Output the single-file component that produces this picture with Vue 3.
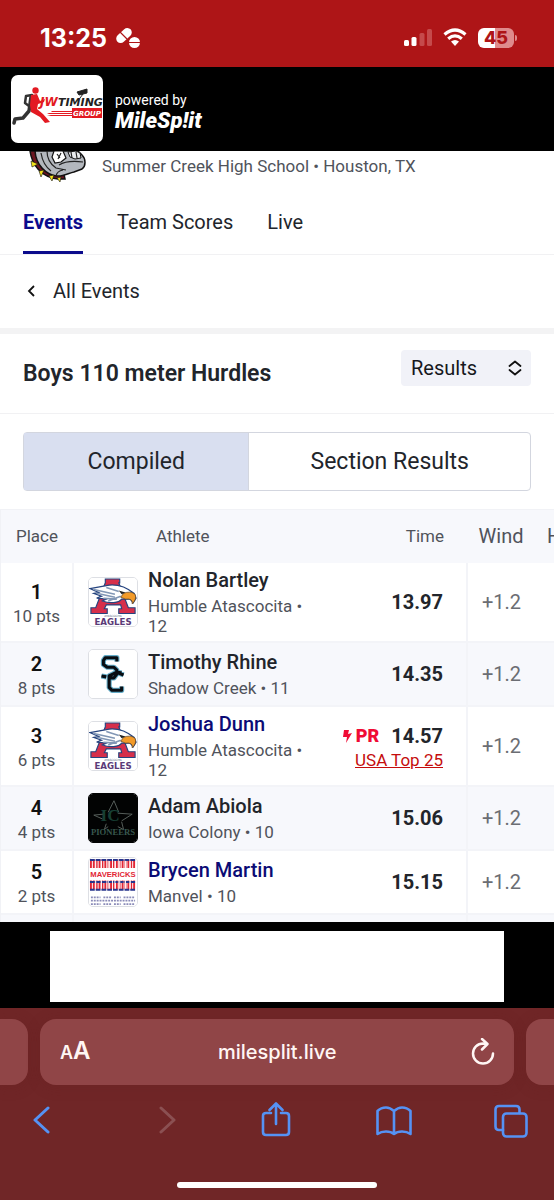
<script setup>
import { ref } from 'vue'

const tabs = ['Events', 'Team Scores', 'Live']
const activeTab = ref('Events')
const mode = ref('Compiled')
const view = ref('Results')
const address = ref('milesplit.live')

const rows = [
  { place: 1, pts: '10 pts', name: 'Nolan Bartley', school: 'Humble Atascocita', grade: 12, time: '13.97', wind: '+1.2', logo: 'eagles' },
  { place: 2, pts: '8 pts', name: 'Timothy Rhine', school: 'Shadow Creek', grade: 11, time: '14.35', wind: '+1.2', logo: 'creek' },
  { place: 3, pts: '6 pts', name: 'Joshua Dunn', school: 'Humble Atascocita', grade: 12, time: '14.57', wind: '+1.2', logo: 'eagles', link: true, pr: true, rank: 'USA Top 25' },
  { place: 4, pts: '4 pts', name: 'Adam Abiola', school: 'Iowa Colony', grade: 10, time: '15.06', wind: '+1.2', logo: 'pioneers' },
  { place: 5, pts: '2 pts', name: 'Brycen Martin', school: 'Manvel', grade: 10, time: '15.15', wind: '+1.2', logo: 'mavericks', link: true }
]
</script>

<template>
  <div class="phone">
    <div class="status">
      <div class="clock">
        <span>13:25</span>
        <svg width="26" height="24" viewBox="0 0 26 24" aria-hidden="true">
          <g fill="#fff">
            <rect x="0" y="5" width="18" height="9" rx="4.500" transform="rotate(-43 9 9.500)" />
            <circle cx="19.500" cy="16.500" r="5.500" />
          </g>
          <path d="M5 6l7 7M13 16.500h13" stroke="#ae1517" stroke-width="1.200" />
        </svg>
      </div>
      <div class="signals">
        <svg width="28" height="20" viewBox="0 0 28 20" aria-hidden="true">
          <rect x="0" y="12" width="5" height="6" rx="1.500" fill="#fff" />
          <rect x="7.500" y="9" width="5" height="9" rx="1.500" fill="#fff" />
          <rect x="15.500" y="5" width="5" height="13" rx="1.500" fill="#c54a4b" />
          <rect x="23" y="1" width="5" height="17" rx="1.500" fill="#c54a4b" />
        </svg>
        <svg width="24" height="20" viewBox="0 0 24 20" aria-hidden="true">
          <path d="M1.500 6.500Q12 -2.500 22.500 6.500M5.200 10.700Q12 5 18.800 10.700" fill="none" stroke="#fff" stroke-width="3.200" />
          <path d="M8 13.600Q12 10.300 16 13.600L12 18Z" fill="#fff" />
        </svg>
        <div class="battery"><span>45</span></div>
      </div>
    </div>

    <header class="brand">
      <a href="#" class="sponsor" aria-label="JW Timing Group">
        <svg width="92" height="68" viewBox="0 0 92 68" aria-hidden="true">
          <g fill="none" stroke="#333" stroke-linecap="round" stroke-linejoin="round">
            <path d="M21 20L15 21L14 28L18 31" stroke-width="2.500" />
            <path d="M20 22L18 36L12 43L4 44L3 48" stroke-width="3.500" />
          </g>
          <g fill="#e31a22">
            <circle cx="24.500" cy="15.500" r="3.200" />
            <path d="M20 20L26 19L29 26L34 24L33 27L27 29L26 34L32 39L39 47L34 48L29 42L20 37L19 30Z" />
            <path d="M40 36h21v1H41zM36 38h25v1H38zM36 40h25v1H40z" />
            <rect x="61" y="33" width="30" height="10" />
          </g>
          <path d="M66 17l10-3v4l-8 2zM72 19l-3 4" fill="#222" stroke="#222" />
          <text x="29" y="31" class="jw" fill="#e31a22">JW</text>
          <text x="47" y="31" class="timing" fill="#222">TIMING</text>
          <text x="62" y="41" class="group" fill="#fff">GROUP</text>
        </svg>
      </a>
      <div class="powered">
        <span>powered by</span>
        <strong>MileSp!it</strong>
      </div>
    </header>

    <main>
      <div class="venue">
        <svg width="58" height="32" viewBox="0 0 58 32" aria-hidden="true">
          <path d="M1 0C3 14 12 26 29 28L36 28L34 19L18 14L8 0Z" fill="#6b1520" stroke="#111" stroke-width="1.500" />
          <path d="M6 0C7 14 17 24 28 25C33 26 40 22 45 21L53 18C57 15 57 8 53 4L49 0Z" fill="#b3b7bd" stroke="#111" stroke-width="1.500" />
          <path d="M25 0L23 6L26 12L32 11L37 7L34 0Z" fill="#fff" stroke="#111" stroke-width="1.200" />
          <path d="M39 1L41 6L46 8L52 7L51 2L47 0Z" fill="#e9ebed" stroke="#111" stroke-width="1" />
          <path d="M12 2Q14 14 22 20M18 0Q18 11 27 17L37 19M30 14Q38 9 54 11M28 3l3 4m1-5l-3 6m13-7l1 6m4-6l1 6M27 25q1-5 7-6" fill="none" stroke="#222" stroke-width="1.200" />
          <path d="M2 10L9 13L3 16ZM10 20L15 19L12 26ZM20 25L25 24L23 30ZM28 27L32 26L31 31Z" fill="#f3e21b" stroke="#111" stroke-width=".6" />
        </svg>
        <span>Summer Creek High School • Houston, TX</span>
      </div>

      <nav class="tabs">
        <a v-for="tab in tabs" :key="tab" href="#" :class="{ active: activeTab === tab }" @click.prevent="activeTab = tab">{{ tab }}</a>
      </nav>

      <div class="back">
        <a href="#">
          <svg width="8" height="14" viewBox="0 0 8 14" aria-hidden="true"><path d="M7 2L2 7L7 12" fill="none" stroke="#111" stroke-width="1.800" /></svg>
          All Events
        </a>
      </div>

      <div class="title">
        <h1>Boys 110 meter Hurdles</h1>
        <div class="picker">
          <select v-model="view" aria-label="View">
            <option>Results</option>
          </select>
          <svg width="14" height="16" viewBox="0 0 14 16" aria-hidden="true"><path d="M1.500 6L7 1.500L12.500 6M1.500 10L7 14.500L12.500 10" fill="none" stroke="#111" stroke-width="1.800" stroke-linecap="round" stroke-linejoin="round" /></svg>
        </div>
      </div>

      <div class="modes">
        <button v-for="m in ['Compiled', 'Section Results']" :key="m" type="button" :class="{ on: mode === m }" @click="mode = m">{{ m }}</button>
      </div>

      <div class="results">
        <table>
          <colgroup>
            <col class="c-place" /><col class="c-athlete" /><col class="c-time" /><col class="c-wind" /><col class="c-heat" />
          </colgroup>
          <thead>
            <tr>
              <th class="place">Place</th>
              <th class="athlete">Athlete</th>
              <th class="time">Time</th>
              <th class="wind">Wind</th>
              <th class="heat">Heat</th>
            </tr>
          </thead>
          <tbody>
            <tr v-for="r in rows" :key="r.place">
              <td class="place"><b>{{ r.place }}</b><span>{{ r.pts }}</span></td>
              <td class="athlete">
                <div class="who">
                  <svg v-if="r.logo === 'eagles'" class="badge" viewBox="0 0 50 50" aria-hidden="true">
                    <rect width="50" height="50" fill="#fff" />
                    <path d="M17 1H32V5H31L41 31H48V37H31V32H34L33 28H18L16 32H19V37H2V31H7L17 5Z" fill="#d62f4b" stroke="#26447f" stroke-width="1.200" />
                    <path d="M1 11L18 8C25 6 35 8 41 12L47 16L49 21L46 26L43 22L34 22C31 26 22 27 14 24L18 22L8 21L13 19L5 16L10 15Z" fill="#fff" stroke="#26447f" stroke-width="1.300" />
                    <path d="M5 12L27 17M8 16L27 20M15 21L29 22M18 10L31 14M20 24L33 19" stroke="#8297b5" stroke-width="1.600" />
                    <path d="M36 16Q43 13 48 17Q50 22 45 27Q46 21 38 22L33 20Z" fill="#f29a29" stroke="#674927" stroke-width=".8" />
                    <path d="M31 13L38 15L34 17Z" fill="#222" />
                    <text x="25" y="41" class="tiny" text-anchor="middle" fill="#536382">ATASCOCITA</text>
                    <text x="25" y="49" class="eagles" text-anchor="middle" fill="#5b3b78">EAGLES</text>
                  </svg>
                  <svg v-else-if="r.logo === 'creek'" class="badge" viewBox="0 0 50 50" aria-hidden="true">
                    <rect width="50" height="50" fill="#fff" />
                    <g fill="none" stroke-linejoin="round">
                      <path d="M29 12V8H17L15 11V15L19 18H26L29 21V25L26 29H22M13 27L18 28M31 24L36 26M34 24L29 23L21 27V39L24 42H34V38" stroke="#65adc8" stroke-width="5.400" />
                      <path d="M29 12V8H17L15 11V15L19 18H26L29 21V25L26 29H22M13 27L18 28M31 24L36 26M34 24L29 23L21 27V39L24 42H34V38" stroke="#080d12" stroke-width="3.200" />
                    </g>
                  </svg>
                  <svg v-else-if="r.logo === 'pioneers'" class="badge dark" viewBox="0 0 50 50" aria-hidden="true">
                    <rect width="50" height="50" fill="#020303" />
                    <path d="M20 19L26 7L31 19M30 20L45 21L34 28M34 29L36 37L30 34M20 34L16 37L18 31M14 26L5 22L15 21" fill="none" stroke="#59615d" />
                    <text x="12" y="28" class="ic" fill="#173f34">IC</text>
                    <text x="25" y="43" class="pioneers" text-anchor="middle" fill="#38574e">PIONEERS</text>
                  </svg>
                  <svg v-else class="badge" viewBox="0 0 50 50" aria-hidden="true">
                    <rect width="50" height="50" fill="#fff" />
                    <g fill="none">
                      <path d="M1 6H49M1 28H49" stroke="#e22635" stroke-width="9" stroke-dasharray="2 1" />
                      <path d="M1 2H49M1 25H49M1 33H49" stroke="#27358c" stroke-width="2" stroke-dasharray="5 1" />
                      <path d="M7 3V32M13 3V32M20 3V32M27 3V32M32 3V32M38 3V32M43 3V32" stroke="#fff" />
                    </g>
                    <rect y="11" width="50" height="12" fill="#fff" />
                    <text x="25" y="20" class="mavs" text-anchor="middle" fill="#e22635">MAVERICKS</text>
                    <path d="M2 41H12M15 41H23M26 41H33M36 41H48M2 48H12M15 48H23M26 48H33M36 48H48M2 44.500H48" stroke="#8a8bb8" stroke-width="1.800" stroke-dasharray="2 1" />
                  </svg>
                  <div class="bio">
                    <a v-if="r.link" href="#" class="name linked">{{ r.name }}</a>
                    <span v-else class="name">{{ r.name }}</span>
                    <span class="school">{{ r.school }} • {{ r.grade }}</span>
                  </div>
                </div>
              </td>
              <td class="time" :class="{ ranked: r.rank }">
                <div class="mark">
                  <span v-if="r.pr" class="pr">
                    <svg width="9" height="14" viewBox="0 0 9 14" aria-hidden="true"><path d="M1 1H6L5 5L9 4L3 14L4 8H0Z" fill="#f00b35" /></svg>PR
                  </span>
                  <b>{{ r.time }}</b>
                </div>
                <a v-if="r.rank" href="#" class="rank">{{ r.rank }}</a>
              </td>
              <td class="wind">{{ r.wind }}</td>
              <td></td>
            </tr>
            <tr class="next"><td></td><td></td><td></td><td></td><td></td></tr>
          </tbody>
        </table>
      </div>
    </main>

    <aside class="ad"><div></div></aside>

    <footer class="browser">
      <div class="pages">
        <div class="peek left"></div>
        <div class="address">
          <button type="button" class="aa" aria-label="Page settings"><small>A</small>A</button>
          <input v-model="address" aria-label="Address" />
          <button type="button" class="reload" aria-label="Reload">
            <svg width="24" height="28" viewBox="0 0 24 28" aria-hidden="true"><path d="M12 5.500A10 10 0 1 0 22 15.500M11 1L16.500 6L11 11.500M12 5.800H16" fill="none" stroke="#fff6f4" stroke-width="2.500" stroke-linecap="round" stroke-linejoin="round" /></svg>
          </button>
        </div>
        <div class="peek right"></div>
      </div>
      <nav class="tools">
        <button type="button" aria-label="Back"><svg width="18" height="36" viewBox="0 0 18 36"><path d="M16 6L3 18L16 30" class="ln thick" /></svg></button>
        <button type="button" class="forward" aria-label="Forward" disabled><svg width="18" height="36" viewBox="0 0 18 36"><path d="M2 6L15 18L2 30" class="ln thick dim" /></svg></button>
        <button type="button" aria-label="Share"><svg width="30" height="36" viewBox="0 0 30 36"><path d="M10 11H5Q2 11 2 14V30Q2 33 5 33H25Q28 33 28 30V14Q28 11 25 11H20M15 22V2M8.500 8L15 1.500L21.500 8" class="ln" /></svg></button>
        <button type="button" aria-label="Bookmarks"><svg width="36" height="36" viewBox="0 0 36 36"><path d="M18 9Q14 5.500 10 5.500Q5 5.500 1.500 9V32Q5 29.500 10 29.500Q15 29.500 18 32Q21 29.500 26 29.500Q31 29.500 34.500 32V9Q31 5.500 26 5.500Q22 5.500 18 9V32" class="ln" /></svg></button>
        <button type="button" aria-label="Tabs"><svg width="34" height="36" viewBox="0 0 34 36"><path d="M9 28H5Q1.500 28 1.500 24.500V7.500Q1.500 4 5 4H22Q25.500 4 25.500 7.500V11" class="ln" /><rect x="9" y="11.500" width="23.500" height="23" rx="3.500" class="ln" /></svg></button>
      </nav>
      <div class="home"></div>
    </footer>
  </div>
</template>

<style>
body { background: #fff; }
</style>

<style scoped>
* { box-sizing: border-box; }
.phone { min-height: 100vh; display: flex; flex-direction: column; overflow: hidden; font-family: Roboto, "Liberation Sans", sans-serif; color: #22252b; background: #fff; }
a { color: inherit; text-decoration: none; }
button { border: 0; padding: 0; background: none; font: inherit; color: inherit; }
svg { display: block; flex: none; }

.status { height: 67px; padding: 8px 40px 0; display: flex; align-items: center; justify-content: space-between; background: #ae1517; color: #fff; font-family: Inter, Roboto, sans-serif; }
.clock { display: flex; align-items: center; gap: 8px; font-size: 25px; font-weight: 700; line-height: 28px; }
.signals { display: flex; align-items: center; gap: 11px; }
.battery { position: relative; width: 36px; height: 20px; border-radius: 6px; background: linear-gradient(90deg, #fff 46%, #df8b8c 46%); color: #ae1517; font-size: 18px; font-weight: 800; line-height: 20px; text-align: center; }
.battery::after { content: ""; position: absolute; left: 37px; top: 7px; width: 2px; height: 6px; border-radius: 0 2px 2px 0; background: #df8b8c; }

.brand { height: 84px; padding: 8px 11px; display: flex; align-items: flex-start; gap: 12px; background: #000; color: #fff; }
.sponsor { display: block; border-radius: 7px; overflow: hidden; background: #fff; }
.jw, .timing, .group { font-family: "DejaVu Sans", sans-serif; font-style: italic; font-weight: 700; }
.jw { font-size: 12px; }
.timing { font-size: 11px; }
.group { font-size: 7px; }
.powered { display: flex; flex-direction: column; padding-top: 16px; font-size: 14px; line-height: 18px; }
.powered strong { font-size: 22px; line-height: 24px; font-weight: 900; font-style: italic; }

.venue { height: 32px; padding-left: 29px; display: flex; gap: 15px; font-size: 17px; line-height: 30px; color: #50535b; }
.tabs { height: 72px; padding: 0 23px; display: flex; gap: 34px; border-bottom: 1px solid #f1f1f3; font-size: 20px; line-height: 24px; }
.tabs a { padding-top: 27px; border-bottom: 3px solid transparent; }
.tabs .active { border-color: #0b0b8c; color: #0b0b8c; font-weight: 700; }
.back { height: 79px; border-bottom: 6px solid #f3f3f4; padding: 24px 27px; font-size: 20px; line-height: 24px; }
.back a { display: flex; align-items: center; gap: 18px; }
.title { height: 80px; padding: 16px 23px 0; display: flex; justify-content: space-between; border-bottom: 1px solid #f1f1f3; }
h1 { margin: 10px 0 0; font-size: 23px; line-height: 28px; font-weight: 600; }
.picker { position: relative; width: 130px; height: 36px; }
.picker select { appearance: none; width: 100%; height: 100%; padding: 0 10px; border: 0; border-radius: 4px; background: #f1f2f8; color: #16181d; font: 20px Roboto, sans-serif; }
.picker svg { position: absolute; right: 9px; top: 10px; pointer-events: none; }
.modes { display: flex; height: 59px; margin: 18px 23px; border: 1px solid #d3d6df; border-radius: 4px; font-size: 23px; line-height: 28px; }
.modes button { flex: 5; border-left: 1px solid #d3d6df; }
.modes button.on { flex: 4; border-left: 0; background: #d9dff0; }

.results { overflow: hidden; border-left: 1px solid #f1f2f6; }
table { width: calc(100% + 61px); table-layout: fixed; border-collapse: collapse; }
.c-place { width: 72px; }
.c-time { width: 130px; }
.c-wind { width: 68px; }
.c-heat { width: 80px; }
th { height: 53px; padding: 0; background: #f7f8fc; border-top: 1px solid #f1f2f6; font-size: 17px; line-height: 24px; font-weight: 400; color: #50535b; text-align: center; }
th.athlete { text-align: left; padding-left: 83px; }
th.time { text-align: right; padding-right: 23px; }
th.wind, th.heat { font-size: 20px; }
th.heat { text-align: left; padding-left: 12px; }
td { height: 64px; padding: 5px 0; border-bottom: 2px solid #f3f4f8; vertical-align: middle; }
tbody tr:nth-child(even) { background: #f7f8fc; }
td.place { padding: 7px 0 3px; text-align: center; border-right: 2px solid #f3f4f8; color: #50535b; font-size: 18px; line-height: 24px; }
td.place b { display: block; font-size: 20px; font-weight: 600; color: #111; }
td.place span { display: block; font-size: 17px; }
.who { display: flex; align-items: center; gap: 10px; padding-left: 14px; }
.badge { width: 50px; height: 50px; border-radius: 5px; border: 1px solid #dddfe4; }
.dark { border-color: #020303; }
.tiny { font: 3px "DejaVu Sans", sans-serif; }
.eagles { font: 700 9px "DejaVu Sans", sans-serif; }
.ic { font: 700 18px "Liberation Serif", serif; }
.pioneers { font: 700 9px "Liberation Serif", serif; }
.mavs { font: 700 8px "Liberation Sans", sans-serif; }
.bio { flex: 1; min-width: 0; display: flex; flex-direction: column; gap: 4px; }
.name { font-size: 20px; line-height: 24px; font-weight: 500; white-space: nowrap; }
.linked { color: #0b0b75; }
.school { font-size: 17px; line-height: 20px; color: #50535b; padding-right: 24px; }
td.time { text-align: right; padding-right: 23px; border-right: 2px solid #f3f4f8; line-height: 24px; }
td.ranked { padding-top: 7px; padding-bottom: 3px; }
.mark { display: flex; justify-content: flex-end; gap: 12px; white-space: nowrap; font-size: 20px; }
.mark b { font-weight: 700; }
.pr { display: flex; align-items: center; gap: 4px; color: #f00b35; font-size: 18px; font-weight: 900; }
.rank { display: block; font-size: 17px; color: #c50d0d; text-decoration: underline; white-space: nowrap; }
td.wind { text-align: center; font-size: 20px; color: #6b6d73; }
.next td { height: 8px; padding: 0; border-bottom: 0; }
.next td:nth-child(1), .next td:nth-child(3) { border-right: 2px solid #f3f4f8; }

.ad { height: 86px; padding: 9px 9% 6px; background: #000; }
.ad div { height: 100%; background: #fff; }

.browser { flex: 1; min-height: 192px; display: flex; flex-direction: column; background: #702627; }
.pages { display: flex; gap: 12px; padding-top: 11px; }
.pages > div { height: 66px; background: #904547; box-shadow: 0 2px 14px #6820224d; }
.peek { flex: none; width: 28px; }
.left { border-radius: 0 16px 16px 0; }
.right { border-radius: 16px 0 0 16px; }
.address { flex: 1; min-width: 0; display: flex; align-items: center; padding: 0 19px 0 20px; border-radius: 16px; color: #fff6f4; font-family: Inter, Roboto, sans-serif; }
.address input { flex: 1; min-width: 0; border: 0; background: none; color: inherit; font: 500 20px Inter, Roboto, sans-serif; text-align: center; }
.aa { display: flex; align-items: baseline; font-size: 24px; line-height: 28px; font-weight: 600; }
.aa small { font-size: 18px; }
.reload { width: 31px; display: flex; justify-content: flex-end; }
.tools { display: flex; justify-content: space-between; align-items: center; padding: 17px 25px 0 23px; }
.tools button { width: 36px; display: flex; justify-content: center; }
.tools .forward { justify-content: flex-end; }
.ln { fill: none; stroke: #5592f4; stroke-width: 2.600; stroke-linecap: round; stroke-linejoin: round; }
.thick { stroke-width: 3; }
.dim { stroke: #8b5052; }
.home { width: 36%; height: 6px; margin: auto auto 12px; border-radius: 3px; background: #fff; }
</style>
